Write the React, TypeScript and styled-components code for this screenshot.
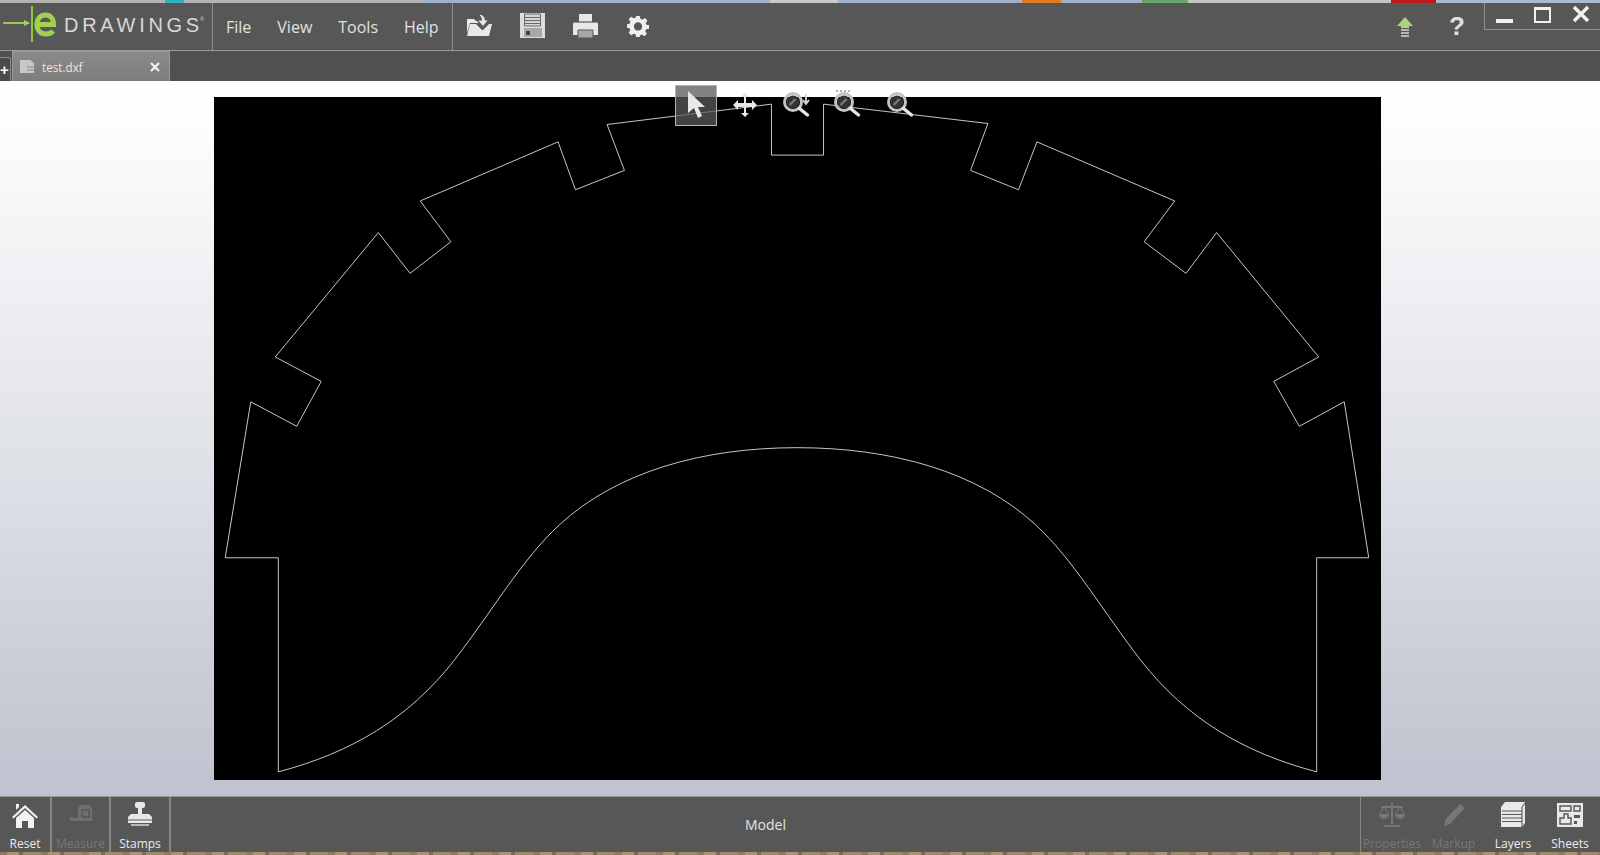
import React from 'react';
import styled, { createGlobalStyle } from 'styled-components';

const Global = createGlobalStyle`
  html, body { margin: 0; padding: 0; height: 100%; overflow: hidden; background: #575757; }
  #root { height: 100%; }
`;

const Shell = styled.div`
  width: 1600px; height: 855px; display: flex; flex-direction: column;
  font-family: "Open Sans", "Noto Sans", "Liberation Sans", sans-serif; color: #e4e4e4; overflow: hidden;
`;
const DesktopStrip = styled.div`
  height: 3px; flex: none;
  background: linear-gradient(90deg, #b4b4b4 0 165px, #2fb4c4 165px 184px, #b4b4b4 184px 423px, #9fb2cc 423px 770px, #c9c9c9 770px 838px, #9fb2cc 838px 1022px, #e07b20 1022px 1061px, #9fb2cc 1061px 1142px, #6aa56a 1142px 1188px, #c4c4c4 1188px 1391px, #c01818 1391px 1436px, #a8b9d0 1436px);
`;
const TitleBar = styled.header`
  height: 47px; flex: none; display: flex; align-items: stretch; background: #575757;
  border-bottom: 1px solid #999; position: relative;
`;
const LogoCell = styled.div`
  width: 213px; flex: none; border-right: 1px solid #8f8f8f; display: flex; align-items: center; box-sizing: border-box;
`;
const LogoMark = styled.svg`
  flex: none; margin-bottom: 6px;
`;
const LogoWord = styled.span`
  font-size: 20px; color: #d8d8d8; margin: 0 0 2px 6px; font-family: "Liberation Sans", sans-serif; white-space: nowrap;
  sup { font-size: 5px; position: relative; top: -3px; vertical-align: super; margin-left: 1px; }
`;
const LogoLetters = styled.span`
  letter-spacing: 3.7px;
`;
const Menu = styled.nav`
  width: 240px; flex: none; border-right: 1px solid #8f8f8f; display: flex; align-items: center; padding-left: 13px; gap: 26px; box-sizing: border-box;
`;
const MenuItem = styled.span`
  font-size: 16px; color: #e2e2e2;
`;
const ToolIcons = styled.div`
  display: flex; align-items: center; gap: 26px; padding: 0 0 2px 13px; flex: 1;
`;
const GearIcon = styled.svg`
  margin-left: 2px;
`;
const RightIcons = styled.div`
  display: flex; align-items: center; width: 249px; padding-left: 45px; box-sizing: border-box; gap: 35px;
`;
const Help = styled.span`
  font: bold 26px "Liberation Sans", sans-serif; color: #dfdfdf;
`;
const WinControls = styled.div`
  position: absolute; right: 0; top: 0; width: 116px; height: 27px; border-left: 1px solid #8f8f8f; border-bottom: 1px solid #8f8f8f;
  box-sizing: border-box;
`;
const MinBtn = styled.i`
  position: absolute; left: 11px; top: 16px; width: 17px; height: 4px; background: #f2f2f2;
`;
const MaxBtn = styled.i`
  position: absolute; left: 49px; top: 4px; width: 17px; height: 16px; box-sizing: border-box; border: 2px solid #f0f0f0; border-top-width: 3px;
`;
const CloseBtn = styled.svg`
  position: absolute; left: 87px; top: 2px;
`;
const TabBar = styled.div`
  height: 30px; flex: none; display: flex; align-items: flex-end; background: #505050; position: relative;
`;
const PlusBox = styled.div`
  width: 11px; height: 24px; background: #4a4a4a; border: 1px solid #8a8a8a; border-left: 0; border-bottom: 0; border-top-right-radius: 3px; box-sizing: border-box;
  color: #fff; font: bold 15px "Liberation Sans", sans-serif; line-height: 24px; text-align: left;
`;
const Tab = styled.div`
  width: 158px; height: 30px; margin-left: 1px; background: linear-gradient(#8a8a8a, #7d7d7d); border: 1px solid #9a9a9a; border-bottom: 0; box-sizing: border-box;
  display: flex; align-items: center; padding-left: 7px; position: relative;
`;
const TabName = styled.span`
  font-size: 11.7px; color: #e8e8e8; margin-left: 7px;
`;
const TabClose = styled.svg`
  position: absolute; right: 9px; top: 10px;
`;
const Stage = styled.main`
  flex: 1; min-height: 0; display: flex; justify-content: flex-start; position: relative; padding: 16px 0 16px 214px; box-sizing: border-box;
  background: linear-gradient(#ffffff 0%, #fcfcfc 8%, #eeeff2 30%, #dcdfe5 57%, #cdd0d9 78%, #bfc3cf 100%);
`;
const Canvas = styled.svg`
  width: 1167px; height: 683px; display: block; background: #000;
`;
const ViewTools = styled.div`
  position: absolute; left: 675px; top: 4px; height: 40px; display: flex; align-items: center;
`;
const ViewTool = styled.div<{ $active?: boolean }>`
  width: 42px; height: 41px; margin-right: 9px; display: flex; align-items: center; justify-content: center; box-sizing: border-box;
  ${p => p.$active ? 'background: rgba(90,90,90,.75); border: 1px solid #b5b5b5;' : ''}
`;
const ShiftedTool = styled(ViewTool)`
  position: relative; left: -2px;
`;
const BottomBar = styled.footer`
  height: 56px; flex: none; display: flex; align-items: stretch; background: #575757; border-top: 1px solid #999; box-sizing: border-box;
`;
const ActionGroup = styled.div`
  display: flex; align-items: stretch;
`;
const Action = styled.div<{ $w: number; $off?: boolean; $sep?: boolean }>`
  width: ${p => p.$w}px; flex: none; display: flex; flex-direction: column; align-items: center; box-sizing: border-box;
  color: ${p => p.$off ? '#787878' : '#ececec'};
  ${p => p.$sep ? 'border-right: 2px solid #868686;' : ''}
`;
const ActionIcon = styled.div`
  height: 39px; padding-bottom: 3px; box-sizing: border-box; display: flex; align-items: center; justify-content: center;
`;
const ActionLabel = styled.span`
  font-size: 12px; line-height: 16px; white-space: nowrap;
`;
const ModelLabel = styled.div`
  flex: 1; display: flex; align-items: center; justify-content: center; font-size: 14px; color: #e4e4e4;
`;
const RightGroup = styled.div`
  display: flex; align-items: stretch; border-left: 1px solid #868686; padding-right: 2px;
`;
const Dirt = styled.div`
  height: 3px; flex: none;
  background: repeating-linear-gradient(90deg, #8c7b5c 0 7px, #a8946e 7px 19px, #7a6c52 19px 23px, #9d8a66 23px 41px);
`;

const outer = '273,757 273,547 221,547 246,394 291,418 315,374 270,350 371,228 402,268 442,237 412,197 547,139 564,186 612,167 595,122 756,102 756,152 807,152 807,102 968,121 951,167 998,186 1016,139 1151,197 1121,237 1162,268 1192,228 1292,350 1248,374 1273,418 1317,394 1341,547 1290,547 1290,757';
const curve = 'M273 757 C345 738 400 705 445 648 C482 600 512 548 548 515 C605 462 690 439 781 439 C873 439 958 462 1015 515 C1051 548 1081 600 1118 648 C1163 705 1218 738 1290 757';

const Mag = ({ extra }: { extra?: React.ReactNode }) => (
  <svg width="30" height="30" viewBox="0 0 30 30" fill="none">
    <circle cx="12" cy="12" r="8.500" stroke="#c4c4c4" strokeWidth="3" />
    <circle cx="12" cy="12" r="6.500" fill="#333" />
    <path d="M8.500 15l6-6" stroke="#777" strokeWidth="2.400" />
    <path d="M18.500 18.500l8 6.500" stroke="#e6e6e6" strokeWidth="3.400" strokeLinecap="round" />
    {extra}
  </svg>
);

export default function App() {
  return (
    <Shell>
      <Global />
      <DesktopStrip />
      <TitleBar>
        <LogoCell>
          <LogoMark width="58" height="38" viewBox="0 0 58 38" fill="none">
            <path d="M3 18h26" stroke="#a5d05a" strokeWidth="1.800" />
            <path d="M24 15l6 3-6 3z" fill="#a5d05a" />
            <path d="M32 1v36" stroke="#8dc63f" strokeWidth="2" />
            <path d="M38 19.500h15.500c0-6.500-3.400-9.500-8-9.500s-8.500 3.500-8.500 9.500 3.500 9.500 9 9.500c3.500 0 5.500-1 7-3" stroke="#a4d04f" strokeWidth="5" />
          </LogoMark>
          <LogoWord><LogoLetters>DRAWING</LogoLetters>S<sup>®</sup></LogoWord>
        </LogoCell>
        <Menu>
          <MenuItem>File</MenuItem>
          <MenuItem>View</MenuItem>
          <MenuItem>Tools</MenuItem>
          <MenuItem>Help</MenuItem>
        </Menu>
        <ToolIcons>
          <svg width="27" height="25" viewBox="0 0 27 25">
            <path d="M1 6h7l2 2h4v2H4L1 20z" fill="#e8e8e8" />
            <path d="M4 11h6l6 6h1l6-6h3l-3 12H1z" fill="#e8e8e8" />
            <path d="M12 1c4 0 7 2 7.500 6H23l-6 7-6-7h4.500C15 4.500 14 3 12 1z" fill="#e8e8e8" stroke="#575757" strokeWidth="1.200" />
          </svg>
          <svg width="27" height="27" viewBox="0 0 27 27">
            <path d="M1 1h25v25H1z" fill="#dcdcdc" />
            <path d="M5.500 2h16v12h-16z" fill="#d4d4d4" stroke="#6a6a6a" />
            <path d="M6 5.500h15M6 8.500h15M6 11.500h15" stroke="#6a6a6a" strokeWidth="1" />
            <path d="M5 16h18v9H5z" fill="#a8a8a8" />
            <path d="M7 19h4v4H7z" fill="#444" />
          </svg>
          <svg width="27" height="26" viewBox="0 0 27 26">
            <path d="M7 1h13v8H7z" fill="#e8e8e8" />
            <path d="M1 11q0-2 2-2h21q2 0 2 2v11H1z" fill="#e8e8e8" />
            <path d="M2 9h23" stroke="#575757" strokeWidth="1.200" />
            <path d="M6 17h15v8H6z" fill="#a8a8a8" stroke="#575757" />
          </svg>
          <GearIcon width="22" height="22" viewBox="0 0 24 24">
            <path fillRule="evenodd" fill="#efefef" d="M10 1h4l.6 3.200 2.200.9 2.700-1.800 2.800 2.800-1.800 2.700.9 2.200L24 11v4l-3.200.5-.9 2.200 1.800 2.700-2.800 2.800-2.700-1.800-2.200.9L14 24h-4l-.5-2.700-2.200-.9-2.700 1.800-2.800-2.800 1.800-2.700-.9-2.200L0 14v-4l2.700-.5.9-2.200-1.800-2.700 2.800-2.800 2.700 1.800 2.200-.9z M12 8a4.500 4.500 0 1 0 0 9 4.500 4.500 0 0 0 0-9z" />
          </GearIcon>
        </ToolIcons>
        <RightIcons>
          <svg width="18" height="20" viewBox="0 0 18 20">
            <path d="M9 0l8 9h-4v2H5V9H1z" fill="#a9d67a" />
            <path d="M5 12h8v2H5zM5 15h8v2H5zM5 18h8v2H5z" fill="#b5b5b5" />
          </svg>
          <Help>?</Help>
        </RightIcons>
        <WinControls>
          <MinBtn />
          <MaxBtn />
          <CloseBtn width="18" height="18" viewBox="0 0 18 18"><path d="M2 2l14 14M16 2L2 16" stroke="#f2f2f2" strokeWidth="3.400" /></CloseBtn>
        </WinControls>
      </TitleBar>
      <TabBar>
        <PlusBox>+</PlusBox>
        <Tab>
          <svg width="15" height="14" viewBox="0 0 15 14">
            <path d="M0 0h10l4 3v10H0z" fill="#c8c8c8" />
            <path d="M7 7h8M7 10h8" stroke="#8a8a8a" />
          </svg>
          <TabName>test.dxf</TabName>
          <TabClose width="10" height="10" viewBox="0 0 10 10"><path d="M1 1l8 8M9 1l-8 8" stroke="#f4f4f4" strokeWidth="2.200" /></TabClose>
        </Tab>
      </TabBar>
      <Stage>
        <Canvas viewBox="210 95 1143 670" preserveAspectRatio="none">
          <polyline points={outer} fill="none" stroke="#d8d8d8" strokeWidth="0.9" />
          <path d={curve} fill="none" stroke="#d8d8d8" strokeWidth="0.9" />
        </Canvas>
        <ViewTools>
          <ViewTool $active>
            <svg width="22" height="30" viewBox="0 0 22 30"><path d="M3 1v22l6-5 4 10 4-2-4-9h7z" fill="#e8e8e8" /></svg>
          </ViewTool>
          <ShiftedTool>
            <svg width="26" height="24" viewBox="0 0 26 24"><path d="M13 0l4 4h-3v6h6V7l5 5-5 5v-3h-6v6h3l-4 4-4-4h3v-6H6v3l-5-5 5-5v3h6V4H9z" fill="#e8e8e8" /></svg>
          </ShiftedTool>
          <ShiftedTool><Mag extra={<path d="M25 4v9M22 10l3 4 3-4" stroke="#d5d5d5" strokeWidth="1.800" fill="none" />} /></ShiftedTool>
          <ShiftedTool><Mag extra={<path d="M4 1h16" stroke="#9a9a9a" strokeWidth="1.500" strokeDasharray="2 2" />} /></ShiftedTool>
          <ViewTool><Mag /></ViewTool>
        </ViewTools>
      </Stage>
      <BottomBar>
        <ActionGroup>
          <Action $w={52} $sep>
            <ActionIcon>
              <svg width="28" height="28" viewBox="0 0 28 28"><path d="M14 4L1 16l1.500 1.500L14 7l11.500 10.500L27 16z" fill="#f2f2f2" /><path d="M5 17l9-8 9 8v10h-6v-7h-6v7H5z" fill="#f2f2f2" /><path d="M5 3h3v3l-3 3z" fill="#f2f2f2" /></svg>
            </ActionIcon>
            <ActionLabel>Reset</ActionLabel>
          </Action>
          <Action $w={59} $off $sep>
            <ActionIcon>
              <svg width="26" height="22" viewBox="0 0 26 22"><path d="M14 1h6q4 0 4 4v12H8q-5 0-6-1-1-1 0-3h3q1 1 4 1h1V6q0-5 4-5z" fill="#6f6f6f" /><rect x="14" y="6" width="7" height="7" fill="none" stroke="#575757" strokeWidth="1.600" /></svg>
            </ActionIcon>
            <ActionLabel>Measure</ActionLabel>
          </Action>
          <Action $w={60} $sep>
            <ActionIcon>
              <svg width="26" height="28" viewBox="0 0 26 28"><rect x="8" y="1" width="10" height="6" rx="2" fill="#e8e8e8" /><path d="M11 7h4v7h-4z" fill="#e8e8e8" /><path d="M1 16l3-3h18l3 3v6H1z" fill="#e8e8e8" /><path d="M1 19h24" stroke="#575757" /><path d="M4 23h18v2H4z" fill="#b8b8b8" /></svg>
            </ActionIcon>
            <ActionLabel>Stamps</ActionLabel>
          </Action>
        </ActionGroup>
        <ModelLabel>Model</ModelLabel>
        <RightGroup>
          <Action $w={62} $off>
            <ActionIcon>
              <svg width="28" height="26" viewBox="0 0 28 26"><path d="M13 1h2v21h-2zM3 4h22v2H3zM6 23h16v2H6z" fill="#777" /><path d="M1 12h10a5 5 0 0 1-10 0zM17 12h10a5 5 0 0 1-10 0z" fill="#777" /><path d="M6 5l-4 7M6 5l4 7M22 5l-4 7M22 5l4 7" stroke="#777" /></svg>
            </ActionIcon>
            <ActionLabel>Properties</ActionLabel>
          </Action>
          <Action $w={61} $off>
            <ActionIcon>
              <svg width="24" height="24" viewBox="0 0 24 24"><path d="M18 1l5 4-15 16-6 2 2-7z" fill="#777" /></svg>
            </ActionIcon>
            <ActionLabel>Markup</ActionLabel>
          </Action>
          <Action $w={58}>
            <ActionIcon>
              <svg width="28" height="28" viewBox="0 0 28 28"><path d="M6 1h20v21l-3 4H2V6z" fill="#e8e8e8" /><path d="M3 10h20M3 13.500h20M3 17h20M3 20.500h20M23 6v20M23 6l3-4" stroke="#575757" strokeWidth="1.100" /></svg>
            </ActionIcon>
            <ActionLabel>Layers</ActionLabel>
          </Action>
          <Action $w={56}>
            <ActionIcon>
              <svg width="26" height="24" viewBox="0 0 26 24"><path d="M0 0h26v24H0z" fill="#e8e8e8" /><path d="M3 3h11v5H3zM17 3h6v5h-6z" fill="none" stroke="#575757" strokeWidth="1.400" /><path d="M7 11h4v4h3v6H3v-6h4z" fill="none" stroke="#575757" strokeWidth="1.400" /><path d="M17 12h6v3h-6zM17 18h3v3h-3z" fill="#575757" /></svg>
            </ActionIcon>
            <ActionLabel>Sheets</ActionLabel>
          </Action>
        </RightGroup>
      </BottomBar>
      <Dirt />
    </Shell>
  );
}
